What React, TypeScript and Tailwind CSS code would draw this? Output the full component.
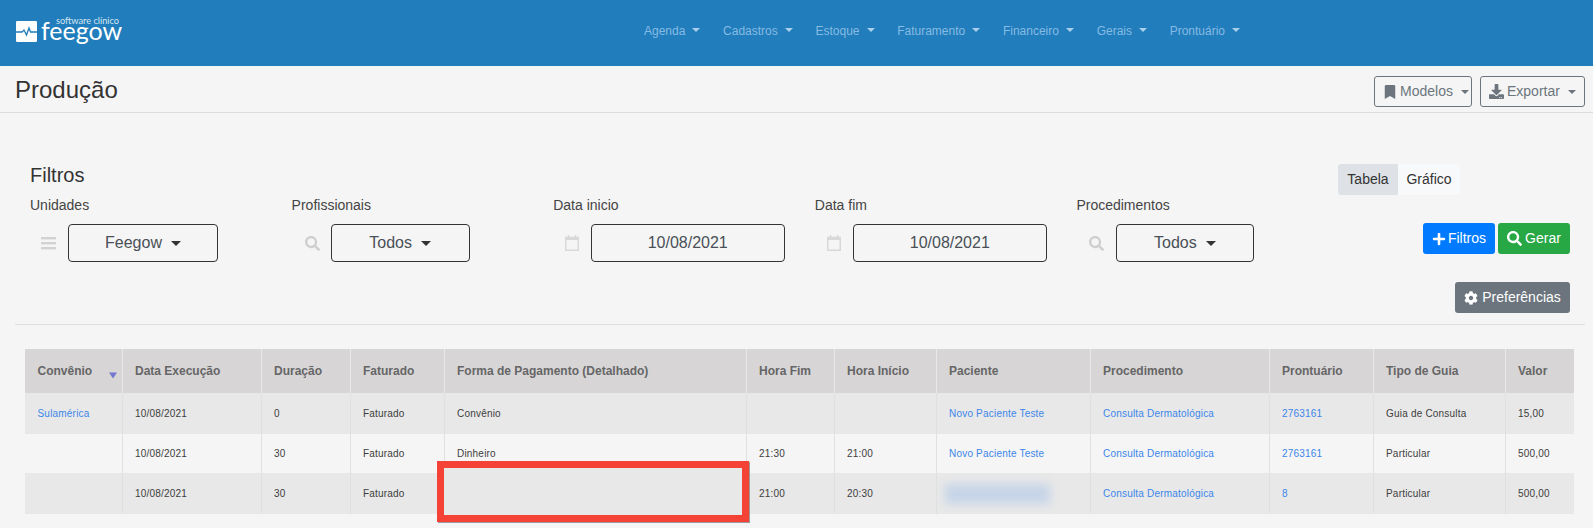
import React from 'react';
import { FaBookmark, FaCog, FaDownload, FaPlus, FaSearch } from 'react-icons/fa';

const navItems = ['Agenda', 'Cadastros', 'Estoque', 'Faturamento', 'Financeiro', 'Gerais', 'Prontuário'];

const columns = [
  { label: 'Convênio', width: 'w-[97px]' },
  { label: 'Data Execução', width: 'w-[139px]' },
  { label: 'Duração', width: 'w-[89px]' },
  { label: 'Faturado', width: 'w-[94px]' },
  { label: 'Forma de Pagamento (Detalhado)', width: 'w-[302px]' },
  { label: 'Hora Fim', width: 'w-[88px]' },
  { label: 'Hora Início', width: 'w-[102px]' },
  { label: 'Paciente', width: 'w-[154px]' },
  { label: 'Procedimento', width: 'w-[179px]' },
  { label: 'Prontuário', width: 'w-[104px]' },
  { label: 'Tipo de Guia', width: 'w-[132px]' },
  { label: 'Valor', width: 'w-[69px]' },
];

type Cell = { text?: string; link?: boolean; blur?: boolean };

const rows: { height: string; bg: string; cells: Cell[] }[] = [
  {
    height: 'h-[41px]',
    bg: 'bg-[#e8e8e8]',
    cells: [
      { text: 'Sulamérica', link: true },
      { text: '10/08/2021' },
      { text: '0' },
      { text: 'Faturado' },
      { text: 'Convênio' },
      {},
      {},
      { text: 'Novo Paciente Teste', link: true },
      { text: 'Consulta Dermatológica', link: true },
      { text: '2763161', link: true },
      { text: 'Guia de Consulta' },
      { text: '15,00' },
    ],
  },
  {
    height: 'h-[39px]',
    bg: 'bg-[#f5f5f5]',
    cells: [
      {},
      { text: '10/08/2021' },
      { text: '30' },
      { text: 'Faturado' },
      { text: 'Dinheiro' },
      { text: '21:30' },
      { text: '21:00' },
      { text: 'Novo Paciente Teste', link: true },
      { text: 'Consulta Dermatológica', link: true },
      { text: '2763161', link: true },
      { text: 'Particular' },
      { text: '500,00' },
    ],
  },
  {
    height: 'h-[41px]',
    bg: 'bg-[#e8e8e8]',
    cells: [
      {},
      { text: '10/08/2021' },
      { text: '30' },
      { text: 'Faturado' },
      {},
      { text: '21:00' },
      { text: '20:30' },
      { blur: true },
      { text: 'Consulta Dermatológica', link: true },
      { text: '8', link: true },
      { text: 'Particular' },
      { text: '500,00' },
    ],
  },
];

const Caret = ({ className }: { className: string }) => (
  <span className={`inline-block h-0 w-0 border-x-[4px] border-t-[4px] border-x-transparent ${className}`} />
);

const BarsIcon = () => (
  <svg viewBox="0 0 15 13" className="h-[13px] w-[15px] text-[#d2d2d2]" fill="currentColor">
    <rect x="0" y="0" width="15" height="2.4" />
    <rect x="0" y="5" width="15" height="2.4" />
    <rect x="0" y="10" width="15" height="2.4" />
  </svg>
);

const CalendarIcon = () => (
  <svg viewBox="0 0 14 16" className="h-[16px] w-[14px] text-[#d8d8d8]" fill="none" stroke="currentColor">
    <path d="M3.5 0v3M10.5 0v3" strokeWidth="1.5" />
    <rect x="0.75" y="2.5" width="12.5" height="12.75" strokeWidth="1.5" />
    <path d="M0.75 4h12.5" strokeWidth="2" />
  </svg>
);

const Logo = () => (
  <div className="flex items-end pb-[2px]">
    <svg viewBox="0 0 21 21" className="mb-[1px] h-[21px] w-[21px]">
      <rect x="0" y="0" width="21" height="21" rx="1.2" fill="#fff" />
      <path d="M0 11h6l2-2 2.5 5 2.5-7 1.5 4h6.5" fill="none" stroke="#217dbb" strokeWidth="1.3" />
    </svg>
    <div className="relative ml-[4px] h-[22px] w-[78px] font-['Lato',sans-serif] text-white">
      <span className="absolute left-0 top-[4px] text-[25px] leading-[10px]">feegow</span>
      <span className="absolute right-0 top-[-5px] text-[9.2px] leading-[9px] whitespace-nowrap text-[#d5e6f3]">software clínico</span>
    </div>
  </div>
);

const OutlineButton = ({ icon, label, width }: { icon: React.ReactNode; label: string; width: string }) => (
  <button className={`flex h-[31px] items-center rounded-[3px] border border-[#6c757d] bg-[#f5f5f5] pl-[8px] text-[14px] text-[#6c757d] ${width}`}>
    {icon}
    <span className="ml-[3px]">{label}</span>
    <Caret className="ml-[8px] border-t-[#6c757d]" />
  </button>
);

const FilterField = ({ label, icon, box, iconWidth, offset }: { label: string; icon: React.ReactNode; box: React.ReactNode; iconWidth: string; offset: string }) => (
  <div className="w-[261.6px] shrink-0">
    <div className="h-[18px] text-[14px] leading-[18px] text-[#444]">{label}</div>
    <div className="mt-[10px] flex h-[38px] items-center">
      <div className={`flex shrink-0 items-center ${offset} ${iconWidth}`}>{icon}</div>
      {box}
    </div>
  </div>
);

const SelectBox = ({ text, width }: { text: string; width: string }) => (
  <div className={`flex h-[38px] items-center justify-center rounded-[4px] border border-[#333] text-[16px] text-[#495057] ${width}`}>
    {text}
    <Caret className="ml-[9px] border-x-[5px] border-t-[5px] border-t-[#333]" />
  </div>
);

const DateBox = ({ text }: { text: string }) => (
  <div className="flex h-[38px] w-[194px] items-center justify-center rounded-[4px] border border-[#333] text-[16px] text-[#495057]">
    {text}
  </div>
);

export default function App() {
  return (
    <div className="relative h-screen w-full overflow-hidden bg-[#f5f5f5] font-['Liberation_Sans',Arial,sans-serif]">
      <header className="flex h-[66px] items-center bg-[#217dbb] pl-[16px]">
        <Logo />
        <nav className="ml-[525px] flex gap-[22.7px] pb-[4px] text-[12px] text-[#85bbe4]">
          {navItems.map((item) => (
            <span key={item} className="flex items-center">
              {item}
              <Caret className="ml-[7px] mb-[2px] border-t-[#a9cfec]" />
            </span>
          ))}
        </nav>
      </header>

      <div className="flex h-[47px] items-center justify-between border-b border-[#dcdcdc] pl-[15px] pr-[8px]">
        <h1 className="pt-[2px] text-[24px] text-[#333]">Produção</h1>
        <div className="flex gap-[8px] pt-[5px]">
          <OutlineButton icon={<FaBookmark size={14} />} label="Modelos" width="w-[98px]" />
          <OutlineButton icon={<FaDownload size={15} />} label="Exportar" width="w-[105px]" />
        </div>
      </div>

      <section className="ml-[15px] mr-[8px] flex border-b border-[#dddddd] pb-[11px] pt-[50px]">
        <div className="flex-1 pl-[15px]">
          <h2 className="h-[28px] text-[20px] leading-[24px] text-[#333]">Filtros</h2>
          <div className="mt-[5px] flex">
            <FilterField label="Unidades" offset="pl-[11px]" iconWidth="w-[38px]" icon={<BarsIcon />} box={<SelectBox text="Feegow" width="w-[150px]" />} />
            <FilterField label="Profissionais" offset="pl-[13px]" iconWidth="w-[39px]" icon={<FaSearch size={15} className="text-[#cfcfcf]" />} box={<SelectBox text="Todos" width="w-[139px]" />} />
            <FilterField label="Data inicio" offset="pl-[12px]" iconWidth="w-[37.5px]" icon={<CalendarIcon />} box={<DateBox text="10/08/2021" />} />
            <FilterField label="Data fim" offset="pl-[12px]" iconWidth="w-[38px]" icon={<CalendarIcon />} box={<DateBox text="10/08/2021" />} />
            <FilterField label="Procedimentos" offset="pl-[13px]" iconWidth="w-[39.5px]" icon={<FaSearch size={15} className="text-[#cfcfcf]" />} box={<SelectBox text="Todos" width="w-[138px]" />} />
          </div>
        </div>
        <div className="flex w-[247px] shrink-0 flex-col pr-[15px]">
          <div className="mt-[1px] flex h-[31px] text-[14px] text-[#333]">
            <span className="flex w-[60px] items-center justify-center rounded-l-[3px] bg-[#dee2e6]">Tabela</span>
            <span className="flex w-[62px] items-center justify-center rounded-r-[3px] bg-[#f8f9fa]">Gráfico</span>
          </div>
          <div className="mt-[28px] flex justify-end gap-[3px] text-[14px] text-white">
            <button className="flex h-[31px] w-[72px] items-center justify-center gap-[2px] rounded-[3px] bg-[#007bff]">
              <FaPlus size={14} />
              Filtros
            </button>
            <button className="flex h-[31px] w-[72px] items-center justify-center gap-[3px] rounded-[3px] bg-[#28a745]">
              <FaSearch size={15} />
              Gerar
            </button>
          </div>
          <div className="mt-[28px] flex justify-end text-[14px] text-white">
            <button className="flex h-[31px] w-[115px] items-center justify-center gap-[4px] rounded-[3px] bg-[#6c757d]">
              <FaCog size={14} />
              Preferências
            </button>
          </div>
        </div>
      </section>

      <div className="ml-[25px] mt-[24px]">
        <table className="w-[1549px] table-fixed border-collapse text-left">
          <colgroup>
            {columns.map((c) => (
              <col key={c.label} className={c.width} />
            ))}
          </colgroup>
          <thead>
            <tr className="h-[44px] bg-[#d7d5d6]">
              {columns.map((c, i) => (
                <th key={c.label} className={`relative pl-[12.5px] text-[12px] font-bold text-[#666] ${i > 0 ? 'border-l border-[#e8e8e8]' : ''}`}>
                  {c.label}
                  {i === 0 && (
                    <svg viewBox="0 0 8 6" className="absolute right-[5px] top-[23px] h-[7px] w-[8px]">
                      <polygon points="0,0 8,0 4,6" fill="#7277cf" />
                    </svg>
                  )}
                </th>
              ))}
            </tr>
          </thead>
          <tbody>
            {rows.map((row, r) => (
              <tr key={r} className={`${row.height} ${row.bg}`}>
                {row.cells.map((cell, i) => (
                  <td key={i} className={`pl-[12.5px] text-[10px] tracking-[0.2px] ${cell.link ? 'text-[#3b86ea]' : 'text-[#3d3d3d]'} ${i > 0 ? 'border-l border-[#e0e0e0]' : ''}`}>
                    {cell.blur ? <div className="ml-[-4px] h-[20px] w-[105px] bg-[#c7d5e8] blur-[4px]" /> : cell.text}
                  </td>
                ))}
              </tr>
            ))}
          </tbody>
        </table>
      </div>

      {/* marcação vermelha por cima da tabela */}
      <div className="absolute left-[437px] top-[461px] h-[61px] w-[312px] border-[7px] border-[#f44336] bg-[#e8e8e8] shadow-[1px_1px_0_#9a9a9a]" />
    </div>
  );
}
